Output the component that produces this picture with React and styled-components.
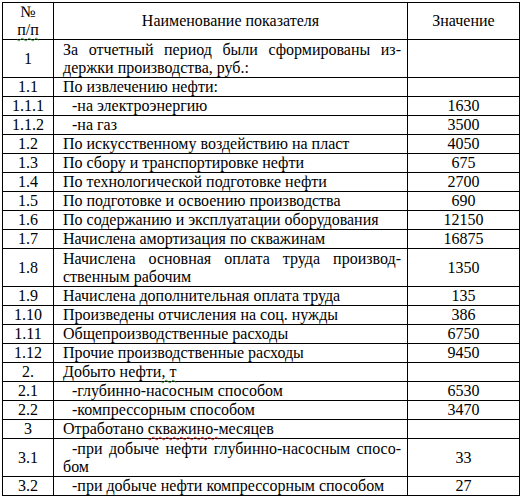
import React from "react";
import styled, { createGlobalStyle } from "styled-components";

const GlobalStyle = createGlobalStyle`
  body {
    margin: 0;
    background: #fff;
    color: #000;
  }
`;

const Table = styled.table`
  margin: 2px 0 0 2px;
  width: 517px;
  table-layout: fixed;
  border-collapse: collapse;
  font-family: "Liberation Serif", "Times New Roman", serif;
  font-size: 16px;
  line-height: 18px;
  color: #000;

  td,
  th {
    border: 1px solid #000;
    padding: 0;
    vertical-align: middle;
  }
`;

const HeadCell = styled.th`
  font-weight: normal;
  text-align: center;
  height: 36px;
`;

const NumCell = styled.td`
  text-align: center;
`;

const NameCell = styled.td`
  text-align: left;
  padding: ${(p) => (p.$multi ? "1px" : "0")} 6px 0 9px !important;
`;

const Line = styled.span`
  display: block;
  text-align: justify;
  text-align-last: ${(p) => (p.$last ? "left" : "justify")};
  padding-left: ${(p) => (p.$indent ? "9px" : "0")};
`;

const ValueCell = styled.td`
  text-align: center;
`;

const Spell = styled.span`
  text-decoration: underline wavy ${(p) => p.$color};
  text-decoration-thickness: 1px;
  text-underline-offset: 2px;
`;

const rows = [
  { n: "1", lines: ["За отчетный период были сформированы из-", "держки производства, руб.:"] },
  { n: "1.1", lines: ["По извлечению нефти:"] },
  { n: "1.1.1", lines: ["-на электроэнергию"], indent: true, v: "1630" },
  { n: "1.1.2", lines: ["-на газ"], indent: true, v: "3500" },
  { n: "1.2", lines: ["По искусственному воздействию на пласт"], v: "4050" },
  { n: "1.3", lines: ["По сбору и транспортировке нефти"], v: "675" },
  { n: "1.4", lines: ["По технологической подготовке нефти"], v: "2700" },
  { n: "1.5", lines: ["По подготовке и освоению производства"], v: "690" },
  { n: "1.6", lines: ["По содержанию и эксплуатации оборудования"], v: "12150" },
  { n: "1.7", lines: ["Начислена амортизация по скважинам"], v: "16875" },
  { n: "1.8", lines: ["Начислена основная оплата труда производ-", "ственным рабочим"], v: "1350" },
  { n: "1.9", lines: ["Начислена дополнительная оплата труда"], v: "135" },
  { n: "1.10", lines: ["Произведены отчисления на соц. нужды"], v: "386" },
  { n: "1.11", lines: ["Общепроизводственные расходы"], v: "6750" },
  { n: "1.12", lines: ["Прочие производственные расходы"], v: "9450" },
  {
    n: "2.",
    lines: [
      <>
        Добыто нефти<Spell $color="#3a9a3a">, т</Spell>
      </>,
    ],
  },
  { n: "2.1", lines: ["-глубинно-насосным способом"], indent: true, v: "6530" },
  { n: "2.2", lines: ["-компрессорным способом"], indent: true, v: "3470" },
  {
    n: "3",
    lines: [
      <>
        Отработано <Spell $color="#e02020">скважино-</Spell>месяцев
      </>,
    ],
  },
  { n: "3.1", lines: ["-при добыче нефти глубинно-насосным спосо-", "бом"], indent: true, v: "33" },
  { n: "3.2", lines: ["-при добыче нефти компрессорным способом"], indent: true, v: "27" },
];

export default function App() {
  return (
    <>
      <GlobalStyle />
      <Table>
        <colgroup>
          <col style={{ width: 51 }} />
          <col style={{ width: 354 }} />
          <col style={{ width: 112 }} />
        </colgroup>
        <thead>
          <tr>
            <HeadCell>
              №
              <br />
              <Spell $color="#3a9a3a">п/п</Spell>
            </HeadCell>
            <HeadCell>Наименование показателя</HeadCell>
            <HeadCell>Значение</HeadCell>
          </tr>
        </thead>
        <tbody>
          {rows.map((r) => (
            <tr key={r.n}>
              <NumCell>{r.n}</NumCell>
              <NameCell $multi={r.lines.length > 1}>
                {r.lines.map((l, i) => (
                  <Line key={i} $last={i === r.lines.length - 1} $indent={r.indent && i === 0}>
                    {l}
                  </Line>
                ))}
              </NameCell>
              <ValueCell>{r.v || ""}</ValueCell>
            </tr>
          ))}
        </tbody>
      </Table>
    </>
  );
}
